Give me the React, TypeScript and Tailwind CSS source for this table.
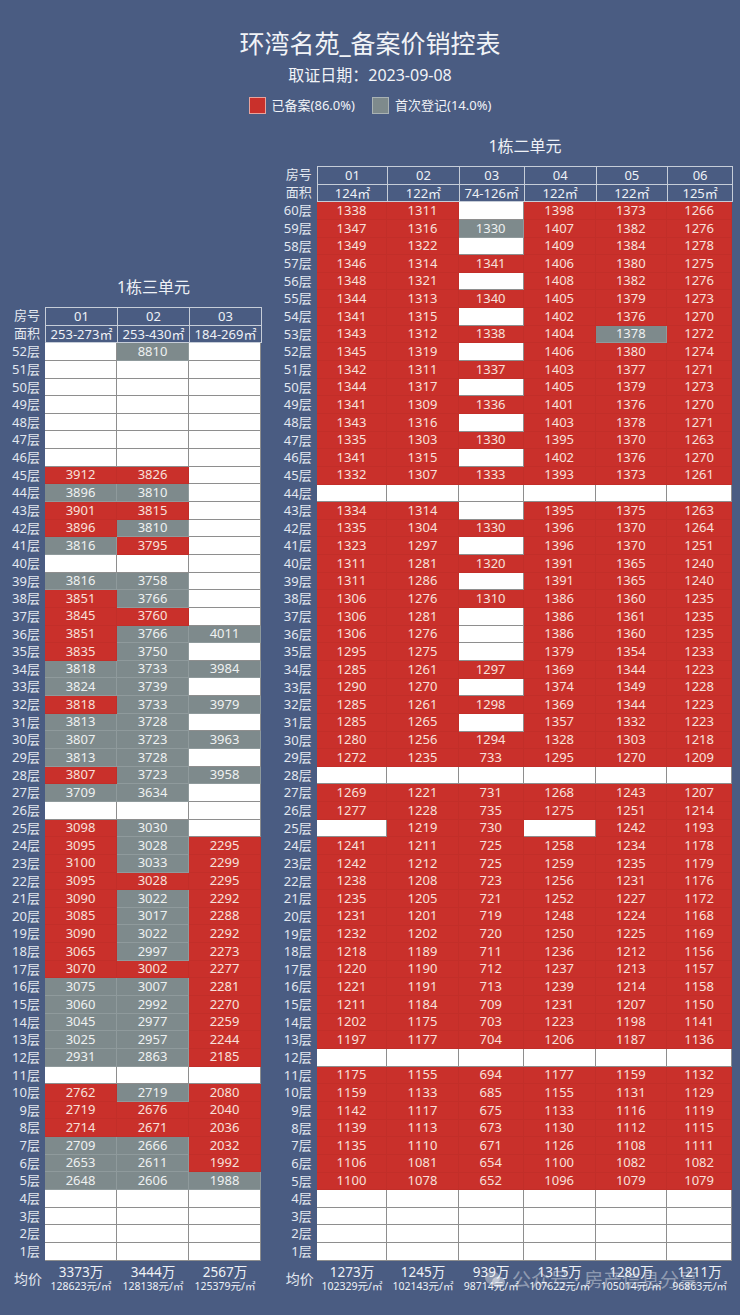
const leftRows: string[] = [
  "- g8810 -",
  "- - -",
  "- - -",
  "- - -",
  "- - -",
  "- - -",
  "- - -",
  "3912 3826 -",
  "g3896 g3810 -",
  "3901 3815 -",
  "3896 g3810 -",
  "g3816 3795 -",
  "- - -",
  "g3816 g3758 -",
  "3851 g3766 -",
  "3845 3760 -",
  "3851 g3766 g4011",
  "3835 g3750 -",
  "g3818 g3733 g3984",
  "g3824 g3739 -",
  "3818 g3733 g3979",
  "g3813 g3728 -",
  "g3807 g3723 g3963",
  "g3813 g3728 -",
  "3807 g3723 g3958",
  "g3709 g3634 -",
  "- - -",
  "3098 g3030 -",
  "3095 g3028 2295",
  "3100 g3033 2299",
  "3095 3028 2295",
  "3090 g3022 2292",
  "3085 g3017 2288",
  "3090 g3022 2292",
  "3065 g2997 2273",
  "3070 3002 2277",
  "g3075 g3007 2281",
  "g3060 g2992 2270",
  "g3045 g2977 2259",
  "g3025 g2957 2244",
  "g2931 g2863 2185",
  "- - -",
  "2762 g2719 2080",
  "2719 2676 2040",
  "2714 2671 2036",
  "g2709 g2666 2032",
  "g2653 g2611 1992",
  "g2648 g2606 g1988",
  "- - -",
  "- - -",
  "- - -",
  "- - -",
];

const rightRows: string[] = [
  "1338 1311 - 1398 1373 1266",
  "1347 1316 g1330 1407 1382 1276",
  "1349 1322 - 1409 1384 1278",
  "1346 1314 1341 1406 1380 1275",
  "1348 1321 - 1408 1382 1276",
  "1344 1313 1340 1405 1379 1273",
  "1341 1315 - 1402 1376 1270",
  "1343 1312 1338 1404 g1378 1272",
  "1345 1319 - 1406 1380 1274",
  "1342 1311 1337 1403 1377 1271",
  "1344 1317 - 1405 1379 1273",
  "1341 1309 1336 1401 1376 1270",
  "1343 1316 - 1403 1378 1271",
  "1335 1303 1330 1395 1370 1263",
  "1341 1315 - 1402 1376 1270",
  "1332 1307 1333 1393 1373 1261",
  "- - - - - -",
  "1334 1314 - 1395 1375 1263",
  "1335 1304 1330 1396 1370 1264",
  "1323 1297 - 1396 1370 1251",
  "1311 1281 1320 1391 1365 1240",
  "1311 1286 - 1391 1365 1240",
  "1306 1276 1310 1386 1360 1235",
  "1306 1281 - 1386 1361 1235",
  "1306 1276 - 1386 1360 1235",
  "1295 1275 - 1379 1354 1233",
  "1285 1261 1297 1369 1344 1223",
  "1290 1270 - 1374 1349 1228",
  "1285 1261 1298 1369 1344 1223",
  "1285 1265 - 1357 1332 1223",
  "1280 1256 1294 1328 1303 1218",
  "1272 1235 733 1295 1270 1209",
  "- - - - - -",
  "1269 1221 731 1268 1243 1207",
  "1277 1228 735 1275 1251 1214",
  "- 1219 730 - 1242 1193",
  "1241 1211 725 1258 1234 1178",
  "1242 1212 725 1259 1235 1179",
  "1238 1208 723 1256 1231 1176",
  "1235 1205 721 1252 1227 1172",
  "1231 1201 719 1248 1224 1168",
  "1232 1202 720 1250 1225 1169",
  "1218 1189 711 1236 1212 1156",
  "1220 1190 712 1237 1213 1157",
  "1221 1191 713 1239 1214 1158",
  "1211 1184 709 1231 1207 1150",
  "1202 1175 703 1223 1198 1141",
  "1197 1177 704 1206 1187 1136",
  "- - - - - -",
  "1175 1155 694 1177 1159 1132",
  "1159 1133 685 1155 1131 1129",
  "1142 1117 675 1133 1116 1119",
  "1139 1113 673 1130 1112 1115",
  "1135 1110 671 1126 1108 1111",
  "1106 1081 654 1100 1082 1082",
  "1100 1078 652 1096 1079 1079",
  "- - - - - -",
  "- - - - - -",
  "- - - - - -",
  "- - - - - -",
];

type Unit = {
  title: string;
  labelW: string;
  cols: { no: string; area: string; w: string; total: string; avg: string }[];
  rows: string[];
};

const unit3: Unit = {
  title: "1栋三单元",
  labelW: "w-[37px]",
  rows: leftRows,
  cols: [
    { no: "01", area: "253-273㎡", w: "w-[72px]", total: "3373万", avg: "128623元/㎡" },
    { no: "02", area: "253-430㎡", w: "w-[72px]", total: "3444万", avg: "128138元/㎡" },
    { no: "03", area: "184-269㎡", w: "w-[72px]", total: "2567万", avg: "125379元/㎡" },
  ],
};

const unit2: Unit = {
  title: "1栋二单元",
  labelW: "w-[33px]",
  rows: rightRows,
  cols: [
    { no: "01", area: "124㎡", w: "w-[70.6px]", total: "1273万", avg: "102329元/㎡" },
    { no: "02", area: "122㎡", w: "w-[71.4px]", total: "1245万", avg: "102143元/㎡" },
    { no: "03", area: "74-126㎡", w: "w-[65px]", total: "939万", avg: "98714元/㎡" },
    { no: "04", area: "122㎡", w: "w-[72px]", total: "1315万", avg: "107622元/㎡" },
    { no: "05", area: "122㎡", w: "w-[71.3px]", total: "1280万", avg: "105014元/㎡" },
    { no: "06", area: "125㎡", w: "w-[65.3px]", total: "1211万", avg: "96863元/㎡" },
  ],
};

function Cell({ value, w }: { value: string; w: string }) {
  if (value === "-") {
    return <div className={`${w} h-full border-b border-r border-[#8e8e8e] bg-white`} />;
  }
  const gray = value.startsWith("g");
  const text = gray ? value.slice(1) : value;
  return (
    <div
      className={`${w} flex h-full items-center justify-center border-b border-r ${
        gray
          ? "border-[#8f9a9c] bg-[#7e8a8c] text-[#eef1f1]"
          : "border-[#c22e29] bg-[#c9302b] text-[#f8e0db]"
      }`}
    >
      {text}
    </div>
  );
}

function UnitTable({ unit }: { unit: Unit }) {
  const count = unit.rows.length;
  return (
    <div className="flex flex-col">
      <div className="mb-[10px] flex">
        <div className={unit.labelW} />
        <div className="flex-1 text-center text-[16px] leading-[20px] text-[#eef1f6]">
          {unit.title}
        </div>
      </div>

      {/* header */}
      <div className="flex">
        <div className={`${unit.labelW} flex flex-col pr-[5px] text-right text-[#e3e8f0]`}>
          <div className="h-[17.65px] leading-[17.65px]">房号</div>
          <div className="h-[17.65px] leading-[17.65px]">面积</div>
        </div>
        <div className="flex border-l border-t border-[#c6cdd8] text-[#eef1f6]">
          {unit.cols.map((c) => (
            <div key={c.no} className={`${c.w} flex flex-col`}>
              <div className="h-[17.65px] border-b border-r border-[#c6cdd8] text-center leading-[16px]">
                {c.no}
              </div>
              <div className="h-[17.65px] border-b border-r border-[#c6cdd8] text-center leading-[16px] whitespace-nowrap">
                {c.area}
              </div>
            </div>
          ))}
        </div>
      </div>

      {/* floors */}
      {unit.rows.map((row, i) => {
        const vals = row.split(" ");
        return (
          <div key={i} className="flex h-[17.65px]">
            <div className={`${unit.labelW} pr-[5px] text-right leading-[17.65px] text-[#e3e8f0]`}>
              {count - i}层
            </div>
            {vals.map((v, j) => (
              <Cell key={j} value={v} w={unit.cols[j].w} />
            ))}
          </div>
        );
      })}

      {/* averages */}
      <div className="mt-[4px] flex">
        <div className={`${unit.labelW} flex items-center justify-end pr-[3px] text-[14px] text-[#e3e8f0]`}>
          均价
        </div>
        {unit.cols.map((c) => (
          <div key={c.no} className={`${c.w} flex flex-col items-center text-[#eef1f6]`}>
            <div className="text-[13.5px] leading-[14px]">{c.total}</div>
            <div className="mt-[2px] whitespace-nowrap text-[10.5px] leading-[11px]">{c.avg}</div>
          </div>
        ))}
      </div>
    </div>
  );
}

export default function App() {
  return (
    <div className="relative h-[1315px] w-[740px] overflow-hidden bg-[#4a5c82] font-['Noto_Sans','Noto_Sans_CJK_SC',sans-serif] text-[13px]">
      <div className="flex flex-col items-center pt-[27px] text-[#f1f3f7]">
        <h1 className="text-[25px] leading-[32px]">环湾名苑_备案价销控表</h1>
        <p className="mt-[5px] text-[16px] leading-[22px]">取证日期：2023-09-08</p>
        <div className="mt-[11px] flex items-center text-[13px] leading-[17px]">
          <span className="h-[17px] w-[17px] border border-[#e8a39c] bg-[#c9302b]" />
          <span className="ml-[6px]">已备案(86.0%)</span>
          <span className="ml-[17px] h-[17px] w-[17px] border border-[#a9b2b4] bg-[#7e8a8c]" />
          <span className="ml-[6px]">首次登记(14.0%)</span>
        </div>
      </div>

      <div className="mt-[22px] flex items-start">
        <div className="ml-[8px] mt-[141px]">
          <UnitTable unit={unit3} />
        </div>
        <div className="ml-[21.7px]">
          <UnitTable unit={unit2} />
        </div>
      </div>

      {/* watermark */}
      <div className="absolute left-[484px] top-[1268px] flex items-center gap-[6px] text-[19px] leading-[24px] text-white/40">
        <svg width="22" height="20" viewBox="0 0 22 20" fill="none">
          <ellipse cx="8.5" cy="8" rx="7.5" ry="6.5" fill="rgba(255,255,255,0.35)" />
          <ellipse cx="14.5" cy="12" rx="6.5" ry="5.5" fill="rgba(255,255,255,0.45)" />
        </svg>
        <span>公众号 · 房产信息分享</span>
      </div>
    </div>
  );
}
